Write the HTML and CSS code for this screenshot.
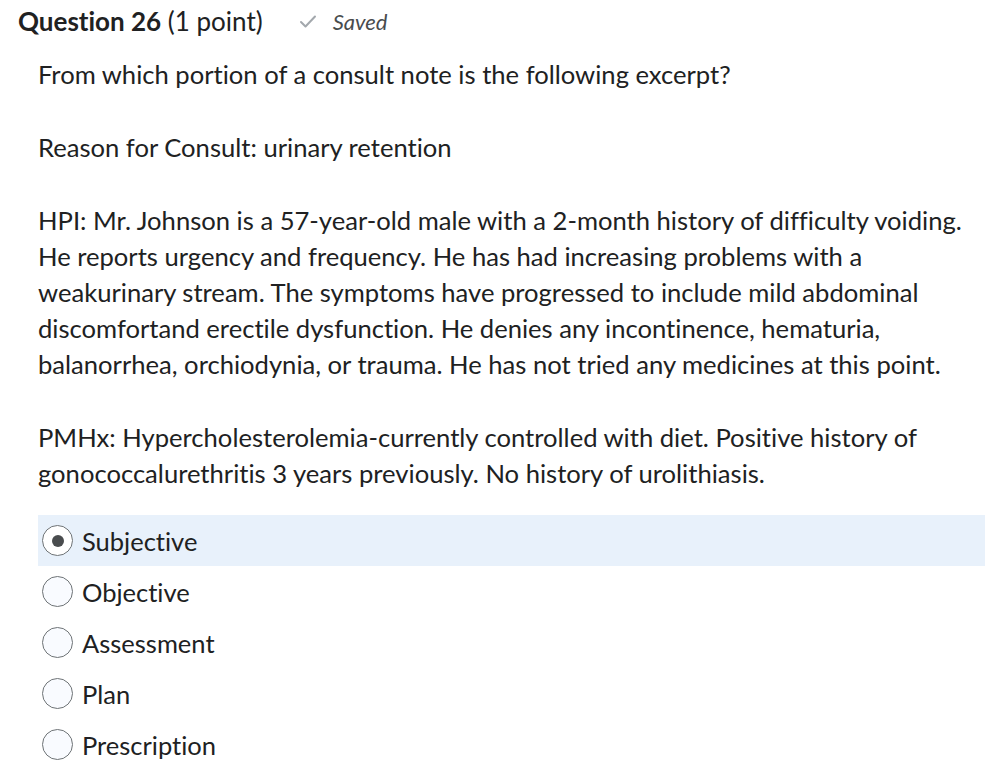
FILE: index.html
```html
<!DOCTYPE html>
<html lang="en">
<head>
<meta charset="utf-8">
<title>Question 26</title>
<link rel="stylesheet" href="styles.css">
</head>
<body>
<div class="question">
  <div class="q-header">
    <h2 class="q-title"><strong>Question 26</strong> (1 point)</h2>
    <span class="saved">
      <svg class="check" width="18" height="15" viewBox="0 0 18 15" aria-hidden="true"><path d="M2 8 L6.5 12.5 L16 2.5" fill="none" stroke="#a3a8ad" stroke-width="2" stroke-linecap="round" stroke-linejoin="round"/></svg>
      <em>Saved</em>
    </span>
  </div>
  <div class="q-body">
    <p>From which portion of a consult note is the following excerpt?</p>
    <p>Reason for Consult: urinary retention</p>
    <p>HPI: Mr. Johnson is a 57-year-old male with a 2-month history of difficulty voiding.<br>He reports urgency and frequency. He has had increasing problems with a<br>weakurinary stream. The symptoms have progressed to include mild abdominal<br>discomfortand erectile dysfunction. He denies any incontinence, hematuria,<br>balanorrhea, orchiodynia, or trauma. He has not tried any medicines at this point.</p>
    <p>PMHx: Hypercholesterolemia-currently controlled with diet. Positive history of<br>gonococcalurethritis 3 years previously. No history of urolithiasis.</p>
  </div>
  <ul class="options">
    <li class="option selected"><span class="radio"><span class="dot"></span></span><span class="label">Subjective</span></li>
    <li class="option"><span class="radio"></span><span class="label">Objective</span></li>
    <li class="option"><span class="radio"></span><span class="label">Assessment</span></li>
    <li class="option"><span class="radio"></span><span class="label">Plan</span></li>
    <li class="option"><span class="radio"></span><span class="label">Prescription</span></li>
  </ul>
</div>
</body>
</html>
```
FILE: styles.css
```css
html, body {
  margin: 0;
  padding: 0;
  background: #ffffff;
}
body {
  font-family: Lato, "Open Sans", sans-serif;
  color: #202122;
  font-variant-ligatures: none;
}
.question {
  padding: 0 15px 0 18px;
}
.q-header {
  display: flex;
  align-items: center;
  gap: 36px;
  height: 42px;
}
.q-title {
  margin: 0;
  font-size: 26px;
  font-weight: 400;
  color: #202122;
}
.q-title strong {
  font-weight: 700;
}
.saved {
  display: flex;
  align-items: center;
  gap: 16px;
  font-size: 22px;
  color: #494c4e;
}
.check {
  display: block;
}
.q-body {
  padding-left: 20px;
  padding-top: 14px;
  font-size: 25.6px;
  line-height: 36px;
}
.q-body p {
  margin: 0 0 37px 0;
}
.q-body p:last-child {
  margin-bottom: 0;
}
.options {
  list-style: none;
  margin: 24px 0 0 20px;
  padding: 0;
}
.option {
  display: flex;
  align-items: center;
  gap: 9px;
  height: 51px;
  padding-left: 4px;
  font-size: 25.5px;
}
.option.selected {
  background: #e8f1fb;
}
.radio {
  box-sizing: border-box;
  width: 31px;
  height: 31px;
  border: 1px solid #6e7376;
  border-radius: 50%;
  background: #f9fbff;
  display: flex;
  align-items: center;
  justify-content: center;
  flex: none;
}
.option.selected .radio {
  background: #ffffff;
}
.dot {
  width: 12px;
  height: 12px;
  border-radius: 50%;
  background: #494c4e;
}
.label {
  color: #202122;
}
```
